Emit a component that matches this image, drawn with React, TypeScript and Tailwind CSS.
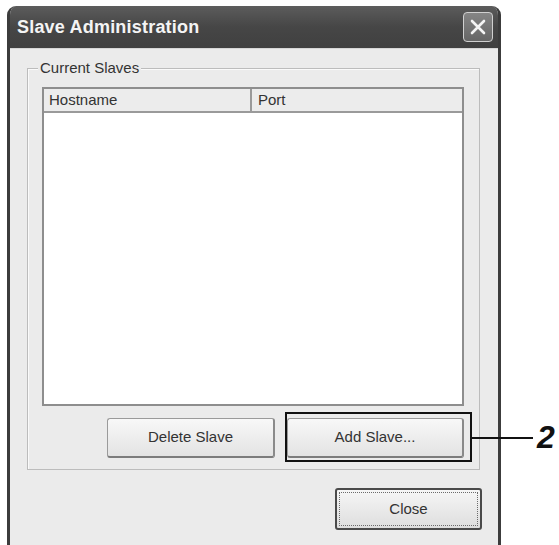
import React from 'react';

const uiFont = "font-['Liberation_Sans','Open_Sans',sans-serif]";

function XpButton({
  label,
  width,
  isDefault = false,
}: {
  label: string;
  width: string;
  isDefault?: boolean;
}) {
  if (isDefault) {
    return (
      <div className={`${width} h-[42px] rounded-[3px] border-2 border-[#4a4a4a] p-[2px] bg-gradient-to-b from-[#f6f6f6] to-[#dedede]`}>
        <div className="h-full w-full border border-dotted border-[#6b6b6b] flex items-center justify-center text-[15px] text-[#333]">
          {label}
        </div>
      </div>
    );
  }
  return (
    <div
      className={`${width} h-[40px] rounded-[3px] border border-[#9a9a9a] border-b-[2px] border-b-[#7c7c7c] border-r-[2px] border-r-[#8a8a8a] bg-gradient-to-b from-[#f8f8f8] to-[#e3e3e3] flex items-center justify-center text-[15px] text-[#333]`}
    >
      {label}
    </div>
  );
}

export default function App() {
  return (
    <div className={`relative h-[545px] w-[559px] overflow-hidden bg-white ${uiFont}`}>
      {/* dialog window */}
      <div className="ml-[7px] mt-[6px] w-[494px] h-[560px] flex flex-col rounded-t-[9px] overflow-hidden border-x-[3px] border-[#3c3c3c] bg-[#ebebeb]">
        {/* title bar */}
        <div className="h-[42px] shrink-0 flex items-center justify-between pl-[7px] pr-[5px] bg-gradient-to-b from-[#5c5c5c] via-[#464646] to-[#404040]">
          <span className="text-[#f4f4f4] font-bold text-[18px] tracking-[0.2px]">Slave Administration</span>
          <div className="w-[30px] h-[30px] rounded-[4px] border-[1.5px] border-[#d0d0d0] bg-gradient-to-b from-[#858585] to-[#666] flex items-center justify-center">
            <svg width="20" height="20" viewBox="0 0 20 20">
              <path d="M4 4 L16 16 M16 4 L4 16" stroke="#f4f4f4" strokeWidth="2.6" strokeLinecap="round" />
            </svg>
          </div>
        </div>

        {/* body */}
        <div className="flex-1 flex flex-col pl-[17px] pr-[16px] pt-[19px] border-t border-[#d6d6d6]">
          {/* Current Slaves group */}
          <div className="relative mr-[2px] border border-[#bcbcbc] shadow-[inset_1px_1px_0_#fafafa] pl-[14px] pr-[15px] pt-[18px] pb-[11px] flex flex-col">
            <span className="absolute -top-[10px] left-[10px] px-[2px] bg-[#ebebeb] text-[15px] text-[#333] leading-[18px]">
              Current Slaves
            </span>
            {/* list view */}
            <div className="h-[319px] border-2 border-[#8e8e8e] bg-white flex flex-col">
              <div className="h-[24px] flex bg-[#ececec] border-b-2 border-[#9a9a9a] text-[15px] text-[#333]">
                <div className="w-[208px] pl-[5px] flex items-center border-r-2 border-[#9a9a9a]">Hostname</div>
                <div className="flex-1 pl-[6px] flex items-center">Port</div>
              </div>
            </div>
            {/* actions */}
            <div className="mt-[12px] flex justify-end gap-[12px]">
              <XpButton label="Delete Slave" width="w-[168px]" />
              <XpButton label="Add Slave..." width="w-[177px]" />
            </div>
          </div>

          <div className="mt-[18px] flex justify-end">
            <XpButton label="Close" width="w-[147px]" isDefault />
          </div>
        </div>
      </div>

      {/* callout marker for the Add Slave button */}
      <div className="absolute left-[285px] top-[412px] w-[187px] h-[50px] border-[2.5px] border-[#111]" />
      <div className="absolute left-[472px] top-[437px] w-[61px] h-[2px] bg-[#111]" />
      <span className="absolute left-[537px] top-[419px] text-[32px] leading-[36px] font-bold italic text-[#111]">
        2
      </span>
    </div>
  );
}
